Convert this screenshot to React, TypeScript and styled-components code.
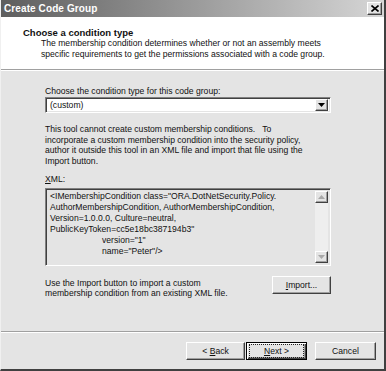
import React from 'react'
import styled, { createGlobalStyle, css } from 'styled-components'

const GlobalStyle = createGlobalStyle`
  html, body {
    margin: 0;
    padding: 0;
    background: #e4e4e4;
  }
  * {
    box-sizing: border-box;
  }
`

const FONT = `'Liberation Sans', Arial, sans-serif`

const raised = css`
  border-top: 1px solid #ffffff;
  border-left: 1px solid #ffffff;
  border-right: 1px solid #404040;
  border-bottom: 1px solid #404040;
  box-shadow: inset -1px -1px 0 #a0a0a0;
`

const sunken = css`
  border-top: 1px solid #808080;
  border-left: 1px solid #808080;
  border-right: 1px solid #ffffff;
  border-bottom: 1px solid #ffffff;
  box-shadow: inset 1px 1px 0 #404040, inset -1px -1px 0 #e4e4e4;
`

const Window = styled.div`
  width: 386px;
  height: 371px;
  display: flex;
  flex-direction: column;
  background: #e4e4e4;
  border-left: 1px solid #f0f0f0;
  border-right: 2px solid #404040;
  border-bottom: 2px solid #404040;
  font-family: ${FONT};
  font-size: 8.6px;
  color: #111;
  overflow: hidden;
`

const TitleBar = styled.div`
  height: 17px;
  flex: none;
  display: flex;
  align-items: center;
  justify-content: space-between;
  padding: 0 2px 0 3px;
  background: linear-gradient(to right, #5e5e5e 0%, #9a9a9a 50%, #d6d6d6 100%);
`

const TitleText = styled.span`
  color: #ffffff;
  font-weight: bold;
  font-size: 10px;
  letter-spacing: 0.1px;
`

const CloseButton = styled.div`
  width: 15px;
  height: 13px;
  display: flex;
  align-items: center;
  justify-content: center;
  background: #e4e4e4;
  ${raised}
`

const Header = styled.div`
  height: 53px;
  flex: none;
  background: #ffffff;
  padding: 10px 0 0 22px;
  border-bottom: 1px solid #a0a0a0;
  box-shadow: 0 1px 0 #ffffff;
`

const HeaderTitle = styled.div`
  font-weight: bold;
  font-size: 9.5px;
  line-height: 11px;
`

const HeaderDesc = styled.div`
  padding-left: 18px;
  line-height: 10.5px;
`

const Body = styled.div`
  flex: 1;
  padding: 16px 53px 0 44px;
  display: flex;
  flex-direction: column;
`

const Label = styled.div`
  line-height: 11px;
`

const Mnemonic = styled.span`
  text-decoration: underline;
`

const Select = styled.div`
  height: 16px;
  display: flex;
  align-items: center;
  justify-content: space-between;
  background: #ffffff;
  padding: 2px 2px 2px 4px;
  ${sunken}
`

const ArrowButton = styled.div`
  width: 13px;
  height: 12px;
  display: flex;
  align-items: center;
  justify-content: center;
  background: #e4e4e4;
  ${raised}
`

const Paragraph = styled.div<{ $top?: number }>`
  line-height: 10.7px;
  margin-top: ${(p) => p.$top ?? 0}px;
`

const XmlBox = styled.div`
  margin-top: 3px;
  height: 78px;
  display: flex;
  background: #e4e4e4;
  ${sunken}
  padding: 2px 2px 2px 4px;
`

const XmlText = styled.div`
  flex: 1;
  line-height: 11px;
`

const XmlLine = styled.div<{ $indent?: number }>`
  white-space: pre;
  padding-left: ${(p) => p.$indent ?? 0}px;
`

const ScrollTrack = styled.div`
  width: 13px;
  display: flex;
  flex-direction: column;
  justify-content: space-between;
  background: #eeeeee;
`

const ImportRow = styled.div`
  margin-top: 10px;
  display: flex;
  justify-content: space-between;
  align-items: flex-start;
`

const ImportText = styled.div`
  padding-top: 2px;
  line-height: 10.5px;
`

const Button = styled.div<{ $default?: boolean; $width?: number }>`
  width: ${(p) => p.$width ?? 60}px;
  height: 18px;
  display: flex;
  align-items: center;
  justify-content: center;
  background: #e4e4e4;
  ${raised}
  ${(p) =>
    p.$default &&
    css`
      border: 1px solid #000;
      box-shadow: inset 1px 1px 0 #ffffff, inset -1px -1px 0 #404040, inset -2px -2px 0 #a0a0a0;
    `}
`

const ButtonLabel = styled.span`
  white-space: pre;
`

const Focus = styled.span`
  border: 1px dotted #222;
  padding: 1px 14px;
  line-height: 10px;
  white-space: pre;
`

const Footer = styled.div`
  height: 38px;
  flex: none;
  border-top: 1px solid #a0a0a0;
  box-shadow: inset 0 1px 0 #ffffff;
  display: flex;
  justify-content: flex-end;
  padding: 10px 8px 0 0;
`

const ButtonGroup = styled.div`
  display: flex;
  gap: 1px;
  margin-right: 8px;
`

function DownArrow({ color = '#000' }: { color?: string }) {
  return (
    <svg width="7" height="4" viewBox="0 0 7 4">
      <polygon points="0,0 7,0 3.5,4" fill={color} />
    </svg>
  )
}

function UpArrow({ color = '#000' }: { color?: string }) {
  return (
    <svg width="7" height="4" viewBox="0 0 7 4">
      <polygon points="0,4 7,4 3.5,0" fill={color} />
    </svg>
  )
}

export default function App() {
  return (
    <>
      <GlobalStyle />
      <Window>
        <TitleBar>
          <TitleText>Create Code Group</TitleText>
          <CloseButton>
            <svg width="8" height="7" viewBox="0 0 8 7">
              <path d="M0.5 0.5 L7.5 6.5 M7.5 0.5 L0.5 6.5" stroke="#000" strokeWidth="1.6" />
            </svg>
          </CloseButton>
        </TitleBar>

        <Header>
          <HeaderTitle>Choose a condition type</HeaderTitle>
          <HeaderDesc>
            The membership condition determines whether or not an assembly meets
            <br />
            specific requirements to get the permissions associated with a code group.
          </HeaderDesc>
        </Header>

        <Body>
          <Label>Choose the condition type for this code group:</Label>
          <Select>
            <span>(custom)</span>
            <ArrowButton>
              <DownArrow />
            </ArrowButton>
          </Select>

          <Paragraph $top={11}>
            This tool cannot create custom membership conditions.&nbsp;&nbsp; To
            <br />
            incorporate a custom membership condition into the security policy,
            <br />
            author it outside this tool in an XML file and import that file using the
            <br />
            Import button.
          </Paragraph>

          <Paragraph $top={7}>
            <Mnemonic>X</Mnemonic>ML:
          </Paragraph>
          <XmlBox>
            <XmlText>
              <XmlLine>{'<IMembershipCondition class="ORA.DotNetSecurity.Policy.'}</XmlLine>
              <XmlLine>AuthorMembershipCondition, AuthorMembershipCondition,</XmlLine>
              <XmlLine>Version=1.0.0.0, Culture=neutral,</XmlLine>
              <XmlLine>PublicKeyToken=cc5e18bc387194b3"</XmlLine>
              <XmlLine $indent={52}>version="1"</XmlLine>
              <XmlLine $indent={52}>{'name="Peter"/>'}</XmlLine>
            </XmlText>
            <ScrollTrack>
              <ArrowButton>
                <UpArrow color="#a8a8a8" />
              </ArrowButton>
              <ArrowButton>
                <DownArrow color="#a8a8a8" />
              </ArrowButton>
            </ScrollTrack>
          </XmlBox>

          <ImportRow>
            <ImportText>
              Use the Import button to import a custom
              <br />
              membership condition from an existing XML file.
            </ImportText>
            <Button $width={59}>
              <ButtonLabel>
                <Mnemonic>I</Mnemonic>mport...
              </ButtonLabel>
            </Button>
          </ImportRow>
        </Body>

        <Footer>
          <ButtonGroup>
            <Button $width={59}>
              <ButtonLabel>
                {'< '}
                <Mnemonic>B</Mnemonic>ack
              </ButtonLabel>
            </Button>
            <Button $default $width={61}>
              <Focus>
                <Mnemonic>N</Mnemonic>
                {'ext >'}
              </Focus>
            </Button>
          </ButtonGroup>
          <Button $width={61}>
            <ButtonLabel>Cancel</ButtonLabel>
          </Button>
        </Footer>
      </Window>
    </>
  )
}
